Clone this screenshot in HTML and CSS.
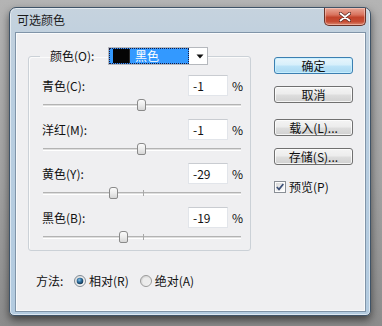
FILE: index.html
```html
<!DOCTYPE html>
<html>
<head>
<meta charset="utf-8">
<link rel="stylesheet" href="styles.css">
</head>
<body>
<div class="window">
  <div class="titlebar">
    <span class="title">可选颜色</span>
    <div class="close">
      <svg width="12" height="10" viewBox="0 0 12 10">
        <path d="M1.5 1.5 L10.5 8.5 M10.5 1.5 L1.5 8.5" stroke="#5a2a22" stroke-width="3.4" stroke-linecap="round"/>
        <path d="M1.5 1.5 L10.5 8.5 M10.5 1.5 L1.5 8.5" stroke="#ffffff" stroke-width="1.8" stroke-linecap="round"/>
      </svg>
    </div>
  </div>
  <div class="client">
    <div class="left">
      <fieldset class="group">
        <legend class="legend">
          <span class="legend-label">颜色(O):</span>
          <span class="combo">
            <span class="combo-sel"><span class="swatch"></span><span class="combo-text">黑色</span></span>
            <span class="combo-arrow"><svg width="8" height="5" viewBox="0 0 8 5"><path d="M0.5 0.5 H7.5 L4 4.5 Z" fill="#111"/></svg></span>
          </span>
        </legend>

        <div class="row"><span class="lbl">青色(C):</span><span class="field">-1</span><span class="pct">%</span></div>
        <div class="slider"><div class="track"></div><div class="tick"></div><div class="thumb" style="left:94px"></div></div>

        <div class="row"><span class="lbl">洋红(M):</span><span class="field">-1</span><span class="pct">%</span></div>
        <div class="slider"><div class="track"></div><div class="tick"></div><div class="thumb" style="left:94px"></div></div>

        <div class="row"><span class="lbl">黄色(Y):</span><span class="field">-29</span><span class="pct">%</span></div>
        <div class="slider"><div class="track"></div><div class="tick"></div><div class="thumb" style="left:66px"></div></div>

        <div class="row"><span class="lbl">黑色(B):</span><span class="field">-19</span><span class="pct">%</span></div>
        <div class="slider last"><div class="track"></div><div class="tick"></div><div class="thumb" style="left:76px"></div></div>
      </fieldset>

      <div class="method">
        <span class="method-label">方法:</span>
        <span class="radio">
          <svg width="12" height="12" viewBox="0 0 12 12">
            <defs>
              <linearGradient id="rg1" x1="0" y1="0" x2="1" y2="1"><stop offset="0" stop-color="#d8d8d8"/><stop offset="1" stop-color="#ffffff"/></linearGradient>
              <radialGradient id="dot" cx="0.4" cy="0.35" r="0.7"><stop offset="0" stop-color="#8fc3e6"/><stop offset="0.45" stop-color="#2e6f9f"/><stop offset="1" stop-color="#0e2c45"/></radialGradient>
            </defs>
            <circle cx="6" cy="6" r="5.5" fill="url(#rg1)" stroke="#7f8a94"/>
            <circle cx="6" cy="6" r="3.3" fill="url(#dot)"/>
          </svg>
        </span>
        <span class="radio-text">相对(R)</span>
        <span class="radio">
          <svg width="12" height="12" viewBox="0 0 12 12">
            <defs>
              <linearGradient id="rg2" x1="0" y1="0" x2="1" y2="1"><stop offset="0" stop-color="#cfcfcf"/><stop offset="1" stop-color="#fbfbfb"/></linearGradient>
            </defs>
            <circle cx="6" cy="6" r="5.5" fill="url(#rg2)" stroke="#9a9a9a"/>
            <circle cx="6" cy="6" r="3.5" fill="#ececec"/>
          </svg>
        </span>
        <span class="radio-text">绝对(A)</span>
      </div>
    </div>

    <div class="right">
      <div class="btn btn-default">确定</div>
      <div class="btn btn-cancel">取消</div>
      <div class="btn btn-load">载入(L)...</div>
      <div class="btn btn-save">存储(S)...</div>
      <div class="check-row">
        <span class="checkbox">
          <svg width="12" height="12" viewBox="0 0 12 12">
            <defs>
              <linearGradient id="cb" x1="0" y1="0" x2="1" y2="1"><stop offset="0" stop-color="#d9d9d9"/><stop offset="1" stop-color="#ffffff"/></linearGradient>
            </defs>
            <rect x="0.5" y="0.5" width="11" height="11" fill="#fdfdfd" stroke="#8a8f96"/>
            <rect x="2" y="2" width="8" height="8" fill="url(#cb)"/>
            <path d="M2.8 6 L5 8.4 L9.3 3" fill="none" stroke="#3d5179" stroke-width="1.7"/>
          </svg>
        </span>
        <span class="check-text">预览(P)</span>
      </div>
    </div>
  </div>
</div>
</body>
</html>
```

FILE: styles.css
```css
* { box-sizing: border-box; }
html, body { margin: 0; padding: 0; }
body {
  width: 382px;
  height: 326px;
  overflow: hidden;
  padding: 7px 0 0 9px;
  background: linear-gradient(180deg, #b4b4b4 0%, #a2a2a2 55%, #8c8c8c 100%);
  font-family: "Noto Sans CJK SC", "Noto Sans", sans-serif;
  font-size: 12px;
  color: #111;
}
.window {
  width: 362px;
  height: 309px;
  border: 1px solid #3f5367;
  border-radius: 7px 7px 5px 5px;
  background: linear-gradient(180deg, #c6d3de 0%, #c0d0de 10%, #b9cee0 30%, #b3cbe0 100%);
  box-shadow: 0 4px 9px rgba(0, 0, 0, 0.55), inset 0 0 0 1px rgba(255, 255, 255, 0.55);
  display: flex;
  flex-direction: column;
}
.titlebar {
  height: 25px;
  display: flex;
  align-items: flex-start;
  padding-left: 7px;
}
.title {
  margin-top: 4px;
  line-height: 16px;
  font-size: 12px;
  color: #1b1b1b;
}
.close {
  margin-left: auto;
  margin-right: 4px;
  width: 42px;
  height: 18px;
  border: 1px solid #6a3328;
  border-top: none;
  border-radius: 0 0 5px 5px;
  background: linear-gradient(180deg, #e9a898 0%, #d9735e 40%, #c2432b 55%, #c64c33 80%, #dc8a72 100%);
  box-shadow: inset 0 0 0 1px rgba(255, 220, 210, 0.45);
  display: flex;
  align-items: center;
  justify-content: center;
}
.client {
  margin: 0 5px 0 6px;
  height: 278px;
  border: 1px solid #fafbfc;
  box-shadow: 0 0 0 1px #8094a8;
  background: #efeff1;
  display: flex;
  padding: 13px 0 0 11px;
}
.left {
  width: 223px;
  display: flex;
  flex-direction: column;
}
.group {
  margin: 0;
  width: 223px;
  min-width: 0;
  border: 1px solid #cbd1d7;
  border-radius: 3px;
  padding: 10px 6px 0 13px;
  box-shadow: inset 1px 1px 0 #fbfbfb;
}
.legend {
  margin-left: -2px;
  padding: 0 0 0 10px;
  height: 18px;
  display: flex;
  align-items: center;
}
.legend-label {
  width: 58px;
  line-height: 18px;
}
.combo {
  width: 100px;
  height: 18px;
  border: 1px solid #b5b8bd;
  background: #ffffff;
  display: flex;
}
.combo-sel {
  width: 80px;
  height: 16px;
  background: #3399ff;
  border: 1px dotted #1a1a40;
  display: flex;
  align-items: center;
  padding-left: 3px;
}
.swatch {
  width: 17px;
  height: 14px;
  background: #050505;
  border-right: 1px solid #2a2a2a;
}
.combo-text {
  margin-left: 5px;
  color: #ffffff;
  line-height: 14px;
}
.combo-arrow {
  flex: 1;
  display: flex;
  align-items: center;
  justify-content: center;
  padding-left: 3px;
}
.row {
  display: flex;
  align-items: center;
  height: 21px;
}
.lbl {
  flex: 1;
  line-height: 16px;
}
.field {
  width: 40px;
  height: 21px;
  background: #ffffff;
  border: 1px solid #e2e5ea;
  border-top-color: #c9ccd1;
  padding-left: 4px;
  line-height: 19px;
}
.pct {
  width: 12px;
  margin-left: 4px;
  line-height: 16px;
}
.slider {
  position: relative;
  margin-left: 1px;
  width: 198px;
  height: 23px;
}
.slider.last { height: 22px; }
.track {
  position: absolute;
  left: 0;
  right: 0;
  top: 8px;
  height: 3px;
  border-top: 1px solid #b3b3b3;
  border-bottom: 1px solid #ffffff;
  background: #dedede;
}
.tick {
  position: absolute;
  left: 100px;
  top: 6px;
  width: 1px;
  height: 6px;
  background: #a8a8a8;
}
.thumb {
  position: absolute;
  top: 3px;
  width: 9px;
  height: 12px;
  border: 1px solid #8a8a8a;
  border-radius: 3px 3px 2px 2px;
  background: linear-gradient(180deg, #fbfbfb 0%, #ececec 50%, #d6d6d6 100%);
}
.method {
  margin-top: 22px;
  padding-left: 8px;
  height: 16px;
  display: flex;
  align-items: center;
}
.method-label {
  width: 38px;
  line-height: 16px;
}
.radio {
  width: 12px;
  height: 12px;
  margin-right: 3px;
  display: flex;
}
.radio-text {
  line-height: 16px;
  margin-right: 11px;
}
.right {
  margin-left: 23px;
  margin-top: 10px;
  width: 79px;
  display: flex;
  flex-direction: column;
}
.btn {
  width: 79px;
  height: 17px;
  border: 1px solid #707070;
  border-radius: 3px;
  background: linear-gradient(180deg, #f4f4f4 0%, #ececec 48%, #dedede 52%, #d0d0d0 100%);
  box-shadow: inset 0 0 0 1px rgba(255, 255, 255, 0.75);
  text-align: center;
  line-height: 15px;
  font-size: 12px;
}
.btn-default {
  border-color: #3c7fb1;
  background: linear-gradient(180deg, #e8f5fc 0%, #d6effb 48%, #bde4f8 52%, #a9d8f2 100%);
  box-shadow: inset 0 0 0 1px rgba(200, 240, 255, 0.9);
}
.btn-cancel { margin-top: 12px; }
.btn-load { margin-top: 16px; }
.btn-save { margin-top: 12px; }
.check-row {
  margin-top: 16px;
  display: flex;
  align-items: center;
  height: 12px;
}
.checkbox {
  width: 12px;
  height: 12px;
  display: flex;
}
.check-text {
  margin-left: 3px;
  line-height: 16px;
}
```
